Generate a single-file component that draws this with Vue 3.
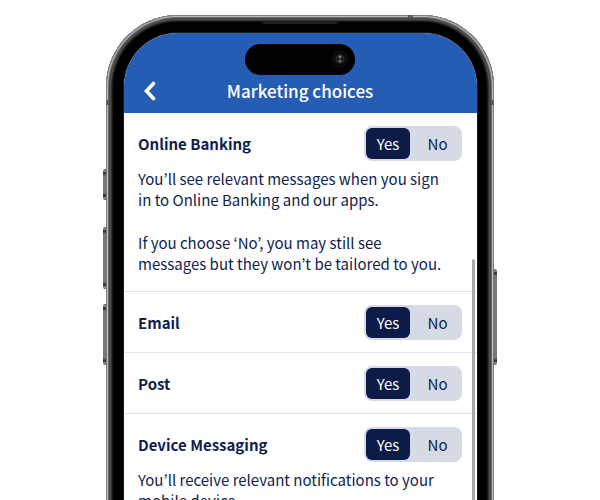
<script setup>
import { ref } from 'vue'

const choices = ref([
  {
    id: 'online-banking',
    title: 'Online Banking',
    value: 'Yes',
    text: [
      'You’ll see relevant messages when you sign in to Online Banking and our apps.',
      'If you choose ‘No’, you may still see messages but they won’t be tailored to you.',
    ],
  },
  { id: 'email', title: 'Email', value: 'Yes', text: [] },
  { id: 'post', title: 'Post', value: 'Yes', text: [] },
  {
    id: 'device-messaging',
    title: 'Device Messaging',
    value: 'Yes',
    text: ['You’ll receive relevant notifications to your mobile device.'],
  },
])
</script>

<template>
  <div class="stage">
    <div class="phone">
      <span class="key key-action"></span>
      <span class="key key-up"></span>
      <span class="key key-down"></span>
      <span class="key key-power"></span>
      <span class="antenna antenna-left"></span>
      <span class="antenna antenna-right"></span>
      <span class="antenna antenna-top"></span>
      <span class="speaker"></span>

      <div class="screen">
        <header class="bar">
          <div class="island"><span class="lens"></span></div>
          <button class="back" type="button" aria-label="Back">
            <svg viewBox="0 0 14 20" width="14" height="20">
              <path d="M10.5 2.5 3.5 10 10.5 17.5" />
            </svg>
          </button>
          <h1>Marketing choices</h1>
        </header>

        <main class="list">
          <section v-for="c in choices" :key="c.id" class="choice">
            <div class="head">
              <h2 :id="c.id">{{ c.title }}</h2>
              <div class="toggle" role="radiogroup" :aria-labelledby="c.id">
                <label v-for="o in ['Yes', 'No']" :key="o" :class="{ on: c.value === o }">
                  <input v-model="c.value" type="radio" :name="c.id" :value="o" />
                  <span>{{ o }}</span>
                </label>
              </div>
            </div>
            <div v-if="c.text.length" class="text">
              <p v-for="t in c.text" :key="t">{{ t }}</p>
            </div>
          </section>
        </main>
        <span class="scroll"></span>
      </div>
    </div>
  </div>
</template>

<style>
body {
  background: #fff;
}
</style>

<style scoped>
.stage {
  box-sizing: border-box;
  display: flex;
  justify-content: center;
  height: 100vh;
  padding: 15px 16px 0;
  overflow: hidden;
  font-family: "Noto Sans CJK KR", "Noto Sans", sans-serif;
  font-size: 15px;
  line-height: 21px;
  color: #0f1e4d;
}
.phone {
  box-sizing: border-box;
  position: relative;
  display: flex;
  width: 100%;
  max-width: 388px;
  margin-bottom: -16px;
  padding: 18px 17px 0 18px;
  border-radius: 72px 72px 0 0;
  background: #000;
  box-shadow:
    inset 0 0 0 1px #7d7e7c,
    inset 0 0 0 2px #b9bab8,
    inset 0 0 0 3px #6c6d6b,
    inset 0 0 0 4px #444,
    inset 0 0 0 5px #505050,
    inset 0 0 0 6px #303030,
    inset 0 0 0 7px #1a1a1a;
}
.key {
  position: absolute;
  left: -3px;
  width: 3px;
  border-radius: 2px 0 0 2px;
  background: linear-gradient(#555, #999 2px, #222 4px, #777 7px, #777 calc(100% - 7px), #222 calc(100% - 4px), #999 calc(100% - 2px), #555);
}
.key-action {
  top: 154px;
  height: 31px;
}
.key-up {
  top: 212px;
  height: 62px;
}
.key-down {
  top: 289px;
  height: 61px;
}
.key-power {
  right: -3px;
  left: auto;
  top: 254px;
  height: 96px;
  border-radius: 0 2px 2px 0;
}
.antenna {
  position: absolute;
  width: 3px;
  height: 5px;
  background: #5d5e5c;
}
.antenna-left {
  top: 85px;
  left: 0;
}
.antenna-right {
  top: 85px;
  right: 0;
}
.antenna-top {
  top: 0;
  right: 81px;
  width: 5px;
  height: 3px;
}
.speaker {
  position: absolute;
  top: 7px;
  left: 50%;
  width: 76px;
  height: 2px;
  margin-left: -38px;
  border-radius: 0 0 2px 2px;
  background: #202020;
}
.screen {
  position: relative;
  flex: 1;
  overflow: hidden;
  border-radius: 54px 54px 0 0;
  background: #fff;
  box-shadow: 0 0 0 1px #1c1c1c;
}
.bar {
  box-sizing: border-box;
  position: relative;
  display: flex;
  align-items: flex-end;
  justify-content: center;
  height: 80px;
  padding: 0 15px 12px 14px;
  background: #265db4;
  color: #fff;
}
.island {
  position: absolute;
  top: 11px;
  left: 50%;
  width: 110px;
  height: 31px;
  margin-left: -56px;
  border-radius: 16px;
  background: #000;
}
.lens {
  position: absolute;
  top: 10px;
  right: 10px;
  width: 10px;
  height: 10px;
  border-radius: 50%;
  background:
    radial-gradient(circle at 5px 3px, #777 0 1px, transparent 2px),
    radial-gradient(circle at 5px 7px, #666 0 1px, transparent 2px),
    radial-gradient(circle, #161616 0 3px, #303030 4px, #111 5px);
  box-shadow: 0 0 0 4px #0b0b0b;
}
.back {
  position: absolute;
  bottom: 12px;
  left: 19px;
  display: flex;
  padding: 0;
  border: 0;
  background: none;
}
.back path {
  fill: none;
  stroke: #fff;
  stroke-width: 3.6;
  stroke-linecap: round;
}
h1,
h2,
p {
  margin: 0;
}
h1 {
  font-size: 17px;
  font-weight: 500;
  line-height: 21px;
}
h2 {
  font-size: 15px;
  font-weight: 700;
  line-height: 21px;
}
.choice {
  padding: 13px 15px 12px 14px;
  border-bottom: 1px solid #e2e3ea;
}
.head {
  display: flex;
  align-items: center;
  justify-content: space-between;
}
.toggle {
  box-sizing: border-box;
  display: grid;
  grid-template-columns: 44px 1fr;
  gap: 5px;
  width: 98px;
  height: 35px;
  padding: 2px;
  border-radius: 8px;
  background: #d5dae5;
}
.toggle label {
  position: relative;
  display: flex;
  align-items: center;
  justify-content: center;
  border-radius: 6px;
  cursor: pointer;
}
.toggle .on {
  background: #0d1b49;
  color: #fff;
}
.toggle input {
  position: absolute;
  inset: 0;
  margin: 0;
  opacity: 0;
}
.text {
  display: grid;
  gap: 22px;
  padding: 7px 14px 5px 0;
}
.scroll {
  position: absolute;
  top: 226px;
  right: 2px;
  bottom: 0;
  width: 3px;
  border-radius: 2px 2px 0 0;
  background: #a9a9a9;
}
</style>
